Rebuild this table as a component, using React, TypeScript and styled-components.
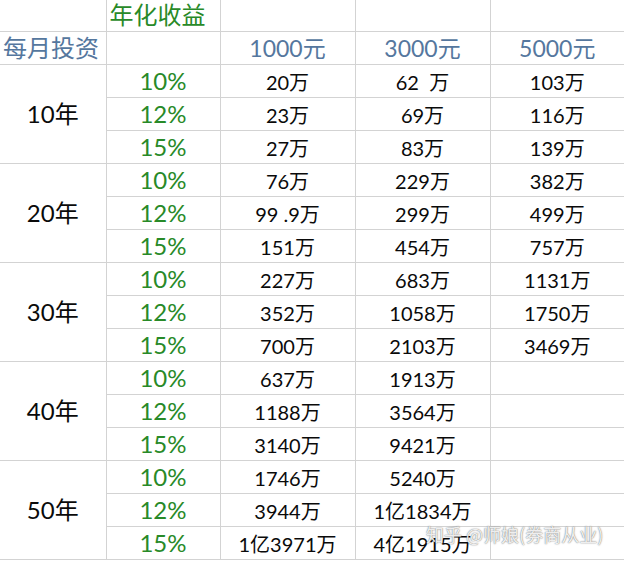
import React from 'react';
import styled, { createGlobalStyle } from 'styled-components';

const GlobalStyle = createGlobalStyle`
  html, body {
    margin: 0;
    padding: 0;
    background: #ffffff;
  }
`;

const latin = `Lato, "Noto Sans CJK SC", sans-serif`;

const colors = {
  line: '#d3d3d3',
  green: '#288a28',
  blue: '#55779e',
  black: '#0a0a0a',
};

const Page = styled.div`
  position: relative;
  width: 624px;
  height: 561px;
  overflow: hidden;
  background: #fff;
`;

const Sheet = styled.table`
  border-collapse: collapse;
  table-layout: fixed;
  width: 624px;
  font-family: ${latin};
`;

const Row = styled.tr<{ $h?: number }>`
  height: ${(p) => p.$h ?? 33}px;
`;

const Cell = styled.td<{ $last?: boolean }>`
  padding: 0;
  border-bottom: 1px solid ${colors.line};
  border-right: ${(p) => (p.$last ? 'none' : `1px solid ${colors.line}`)};
  text-align: center;
  vertical-align: middle;
  line-height: 1;
  white-space: pre;
  overflow: hidden;
`;

const TitleCell = styled(Cell)<{ $color: string }>`
  text-align: left;
  padding-left: 3px;
  font-size: 24px;
  color: ${(p) => p.$color};
`;

const AmountCell = styled(Cell)`
  font-size: 23px;
  color: ${colors.blue};
  padding-top: 1px;
`;

const YearCell = styled(Cell)`
  font-size: 24px;
  color: ${colors.black};
`;

const RateCell = styled(Cell)`
  font-size: 24px;
  color: ${colors.green};
`;

const ValueCell = styled(Cell)`
  font-size: 20px;
  color: ${colors.black};
  padding-top: 2px;
`;

const Watermark = styled.div`
  position: absolute;
  left: 426px;
  top: 521px;
  font-family: "Noto Sans CJK SC", sans-serif;
  font-size: 18px;
  color: rgba(255, 255, 255, 0.9);
  text-shadow: 0 0 1px rgba(80, 80, 80, 0.8), 0 0 2px rgba(80, 80, 80, 0.4);
  white-space: nowrap;
`;

const rates = ['10%', '12%', '15%'];

const groups: { year: string; values: string[][] }[] = [
  { year: '10年', values: [['20万', '62  万', '103万'], ['23万', '69万', '116万'], ['27万', '83万', '139万']] },
  { year: '20年', values: [['76万', '229万', '382万'], ['99 .9万', '299万', '499万'], ['151万', '454万', '757万']] },
  { year: '30年', values: [['227万', '683万', '1131万'], ['352万', '1058万', '1750万'], ['700万', '2103万', '3469万']] },
  { year: '40年', values: [['637万', '1913万', ''], ['1188万', '3564万', ''], ['3140万', '9421万', '']] },
  { year: '50年', values: [['1746万', '5240万', ''], ['3944万', '1亿1834万', ''], ['1亿3971万', '4亿1915万', '']] },
];

export default function App() {
  return (
    <Page>
      <GlobalStyle />
      <Sheet>
        <colgroup>
          <col style={{ width: 106 }} />
          <col style={{ width: 114 }} />
          <col style={{ width: 135 }} />
          <col style={{ width: 135 }} />
          <col style={{ width: 134 }} />
        </colgroup>
        <tbody>
          <Row $h={31}>
            <Cell />
            <TitleCell $color={colors.green}>年化收益</TitleCell>
            <Cell />
            <Cell />
            <Cell $last />
          </Row>
          <Row>
            <TitleCell $color={colors.blue}>每月投资</TitleCell>
            <Cell />
            <AmountCell>1000元</AmountCell>
            <AmountCell>3000元</AmountCell>
            <AmountCell $last>5000元</AmountCell>
          </Row>
          {groups.map((g) =>
            g.values.map((vals, i) => (
              <Row key={g.year + i}>
                {i === 0 ? <YearCell rowSpan={3}>{g.year}</YearCell> : null}
                <RateCell>{rates[i]}</RateCell>
                <ValueCell>{vals[0]}</ValueCell>
                <ValueCell>{vals[1]}</ValueCell>
                <ValueCell $last>{vals[2]}</ValueCell>
              </Row>
            ))
          )}
        </tbody>
      </Sheet>
      <Watermark>知乎 @师娘(券商从业)</Watermark>
    </Page>
  );
}
